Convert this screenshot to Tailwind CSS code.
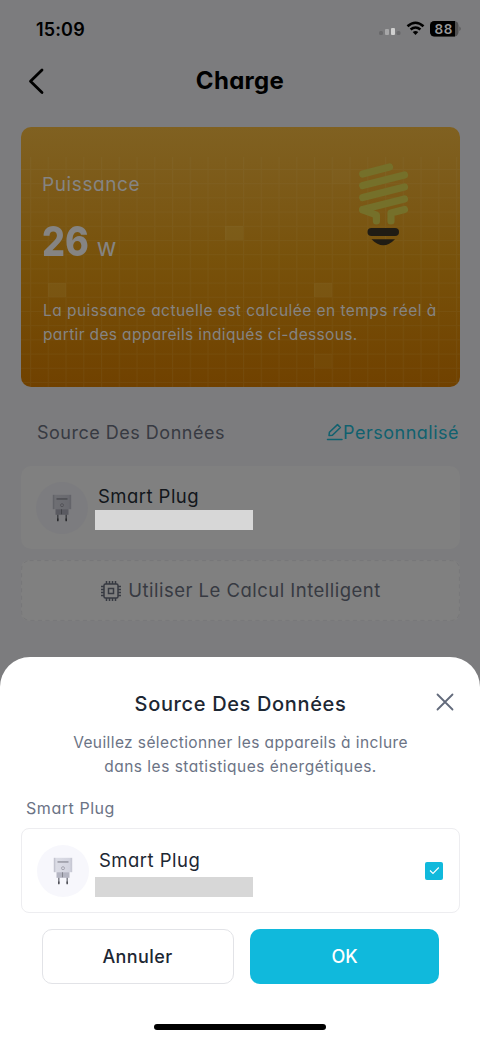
<!DOCTYPE html>
<html lang="fr">
<head>
<meta charset="utf-8">
<title>Charge</title>
<script src="https://cdn.jsdelivr.net/npm/@tailwindcss/browser@4"></script>
</head>
<body class="w-[480px] h-[1039px] overflow-hidden bg-[#7c7c7e] font-[Inter,sans-serif] whitespace-nowrap [font-feature-settings:'cv11']">
<svg class="absolute" width="0" height="0">
  <defs>
    <linearGradient id="plugBody" x1="0" x2="1"><stop offset="0" stop-color="#b9bac6"/><stop offset=".12" stop-color="#dcdde6"/><stop offset=".85" stop-color="#d3d4df"/><stop offset="1" stop-color="#c3c4d0"/></linearGradient>
    <symbol id="plug" viewBox="0 0 20 28">
      <path d="M.8.8h18.4v14.4H.8z" fill="url(#plugBody)"/>
      <path d="M4.500 4.300h11v1.300h-11z" fill="#8d8e98"/>
      <circle cx="10" cy="11.200" r="1.500" fill="none" stroke="#9a9ba6" stroke-width=".8"/>
      <path d="M3.500 15.200h13v5.600h-13z" fill="#b4b5c2"/>
      <path d="M9 15.200h1v5h-1z" fill="#85868f"/>
      <path d="M5.800 20.800v5.800M14.200 20.800v5.800" stroke="#777881" stroke-width="1.400"/>
      <path d="M5.800 24.500v2.700M14.200 24.500v2.700" stroke="#4b4c52" stroke-width="1.400"/>
    </symbol>
  </defs>
</svg>
<main class="relative flex h-full flex-col">
  <div class="flex h-[58px] items-center justify-between pl-[36px] pr-[19px]">
    <span class="text-[18px] font-semibold tracking-[0.15px] text-black">15:09</span>
    <svg width="82" height="16" viewBox="0 0 82 16">
      <rect x="0" y="10" width="4" height="4" rx="1.500" fill="#69696b"/>
      <rect x="6" y="8" width="4" height="6" rx="1" fill="#a7a7a8"/>
      <rect x="12" y="7" width="4" height="7" rx="1" fill="#cfcfcf"/>
      <rect x="17.500" y="10" width="4" height="4" rx="1.500" fill="#69696b"/>
      <path d="M28.500 5.300Q36.500-1.800 44.500 5.300M31.600 8.600Q36.500 4.400 41.400 8.600" fill="none" stroke="#000" stroke-width="2.600"/>
      <path d="M33.700 11Q36.500 9 39.300 11L36.500 14z"/>
      <rect x="51" y="0" width="28.500" height="15.500" rx="4.500" fill="#505051"/>
      <path d="M55.500 0H76v15.500H55.500A4.500 4.500 0 0 1 51 11v-6.500A4.500 4.500 0 0 1 55.500 0z"/>
      <path d="M80.300 5.300q3 2.300 0 4.800z" fill="#5a5a5b"/>
      <text x="64.700" y="12.600" text-anchor="middle" font-family="Inter" font-weight="600" font-size="13.500" letter-spacing=".6" fill="#99999a">88</text>
    </svg>
  </div>
  <header class="relative flex h-[69px] items-start justify-center pt-[7px]">
    <svg class="absolute left-[28px] top-[10px]" width="17" height="27" viewBox="0 0 17 27"><path d="M14 2 2.500 13.300 14 24.500" fill="none" stroke="#000" stroke-width="2.800" stroke-linecap="round" stroke-linejoin="round"/></svg>
    <h1 class="text-[24px] leading-[32px] font-bold tracking-[0.3px] text-black">Charge</h1>
  </header>

  <section class="relative ml-[21px] mr-[20px] h-[260px] overflow-hidden rounded-[10px] bg-linear-to-b from-[#806121] via-[#78520b] to-[#704100] px-[21px]">
    <svg class="absolute inset-0" width="439" height="260">
      <defs><pattern id="grid" x="9" y="13.600" width="17.750" height="14.200" patternUnits="userSpaceOnUse"><path d="M.5 0v14.200M0 .5h17.750" stroke="#8a7a50" stroke-opacity=".12" fill="none"/></pattern></defs>
      <rect y="30" width="439" height="230" fill="url(#grid)"/>
      <g fill="#8b783d" fill-opacity=".2"><path d="M204 99h18v14h-18zM27 156h18v14H27zM293 156h18v14h-18z"/><path d="M311 43h18v14h-18zM293 227h18v14h-18z" fill-opacity=".1"/></g>
    </svg>
    <svg class="absolute left-[337px] top-[36px]" width="51" height="84" viewBox="0 0 51 84" fill="none" stroke="#75702a" stroke-width="7.200" stroke-linecap="round" stroke-linejoin="round">
      <path d="M4.700 11 31.500 4M4.700 22.500 46.500 12M4.700 34.600 46.500 24M4.700 46.600 46.500 36"/>
      <path d="M4.700 46.800 18.400 52V58M46.500 46.500 33 50V58"/>
      <rect x="9.500" y="65" width="31.500" height="8" rx="4" fill="#201c14" stroke="none"/>
      <path d="M13.500 76.200h23.500q-11.700 12-23.500 0z" fill="#201c14" stroke="none"/>
    </svg>
    <div class="relative text-[#858483]">
      <p class="pt-[44px] text-[19px] leading-[28px] tracking-[0.6px]">Puissance</p>
      <div class="mt-[18px] flex h-[48px] items-baseline"><span class="w-[55px] origin-left scale-x-[0.88] text-[41px] leading-[48px] font-extrabold">26</span><span class="text-[19px] font-medium">W</span></div>
      <p class="mt-[34px] pl-px text-[15.5px] leading-[24px]"><span class="tracking-[0.45px]">La puissance actuelle est calculée en temps réel à</span><br><span class="tracking-[0.36px]">partir des appareils indiqués ci-dessous.</span></p>
    </div>
  </section>

  <div class="flex h-[79px] items-center justify-between pl-[37px] pr-[20px] pt-[12px]">
    <h2 class="text-[18px] tracking-[0.5px] text-[#373a42]">Source Des Données</h2>
    <div class="flex items-center text-[#10616f]">
      <svg class="-mt-0.5" width="18" height="18" viewBox="0 0 18 18" fill="none" stroke="currentColor" stroke-width="1.500" stroke-linecap="round" stroke-linejoin="round"><path d="M1.500 16.500H16M3 12.500l.4-3.200L11.500 1.600l2.900 2.900-8 7.700z"/></svg>
      <span class="-ml-px mr-px text-[18px] tracking-[0.5px]">Personnalisé</span>
    </div>
  </div>

  <section class="ml-[21px] mr-[20px] flex h-[83px] rounded-[10px] bg-[#808080] pl-[15px] pt-[16px]">
    <div class="flex size-[52px] items-center justify-center rounded-full bg-[#7c7c7f]"><svg class="brightness-50" width="20" height="28"><use href="#plug"/></svg></div>
    <div class="ml-[7px]">
      <p class="pl-[3px] pt-px text-[18.5px] leading-[27px] tracking-[0.45px] text-[#12161b]">Smart Plug</p>
      <div class="h-[20px] w-[158px] bg-[#d7d7d7]"></div>
    </div>
  </section>

  <section class="relative ml-[21px] mr-[20px] mt-[11px] flex h-[61px] items-center justify-center rounded-[8px] bg-[#808080] text-[#373a42]">
    <svg class="absolute inset-0" width="439" height="61"><rect x=".6" y=".6" width="437.800" height="59.800" rx="8" fill="none" stroke="#777779" stroke-dasharray="4 3.500"/></svg>
    <svg width="22" height="22" viewBox="0 0 22 22" fill="none" stroke="currentColor" stroke-width="1.500"><rect x="4" y="4" width="14" height="14" rx="1.500"/><rect x="8.500" y="8.500" width="5" height="5"/><path d="M6.500 4V1M9.500 4V1M12.500 4V1M15.500 4V1M6.500 21v-3M9.500 21v-3M12.500 21v-3M15.500 21v-3M4 6.500H1M4 9.500H1M4 12.500H1M4 15.500H1M21 6.500h-3M21 9.500h-3M21 12.500h-3M21 15.500h-3"/></svg>
    <span class="ml-[6px] pt-px text-[18.5px] tracking-[0.48px]">Utiliser Le Calcul Intelligent</span>
  </section>

  <div class="mt-[36px] flex flex-1 flex-col rounded-t-[30px] bg-white pl-[21px] pr-[20px]">
    <div class="relative pt-[31px] text-center">
      <h2 class="text-[20px] leading-[32px] font-medium tracking-[0.65px] text-[#1d2733]">Source Des Données</h2>
      <svg class="absolute right-[6px] top-[36px]" width="18" height="18" viewBox="0 0 18 18"><path d="m1.500 1.500 15 15M16.500 1.500l-15 15" stroke="#626a7b" stroke-width="1.800" stroke-linecap="round"/></svg>
      <p class="mt-[11px] text-[15.5px] leading-[24px] text-[#6b7385]"><span class="tracking-[0.4px]">Veuillez sélectionner les appareils à inclure</span><br><span class="tracking-[0.5px]">dans les statistiques énergétiques.</span></p>
    </div>
    <p class="mt-[17px] pl-[5px] text-[16px] leading-[24px] tracking-[0.55px] text-[#6b7385]">Smart Plug</p>
    <div class="mt-[8px] flex h-[85px] items-center rounded-[8px] border border-[#ededf0] pl-[15px] pr-[16px]">
      <div class="flex size-[52px] items-center justify-center rounded-full bg-[#f7f7fc]"><svg width="20" height="28"><use href="#plug"/></svg></div>
      <div class="ml-[6px] flex-1">
        <p class="pl-[4px] pt-px text-[18.5px] leading-[28px] tracking-[0.48px] text-[#1d2733]">Smart Plug</p>
        <div class="mt-[3px] h-[20px] w-[158px] bg-[#d7d7d7]"></div>
      </div>
      <svg width="18" height="18" viewBox="0 0 18 18"><rect width="18" height="18" rx="2" fill="#10b9dc"/><path d="m5 8.500 3 3 5.800-6" fill="none" stroke="#fff" stroke-width="1.100"/></svg>
    </div>
    <div class="mt-[16px] flex h-[55px] gap-4 px-[21px] text-[18px] font-medium">
      <button class="w-[192px] rounded-[10px] border border-[#e2e3e7] pr-px tracking-[0.4px] text-[#1d2733]">Annuler</button>
      <button class="w-[189px] rounded-[10px] bg-[#10b9dc] text-white">OK</button>
    </div>
    <div class="ml-[133px] mt-[40px] h-[6px] w-[172px] rounded-full bg-black"></div>
  </div>
</main>
</body>
</html>
